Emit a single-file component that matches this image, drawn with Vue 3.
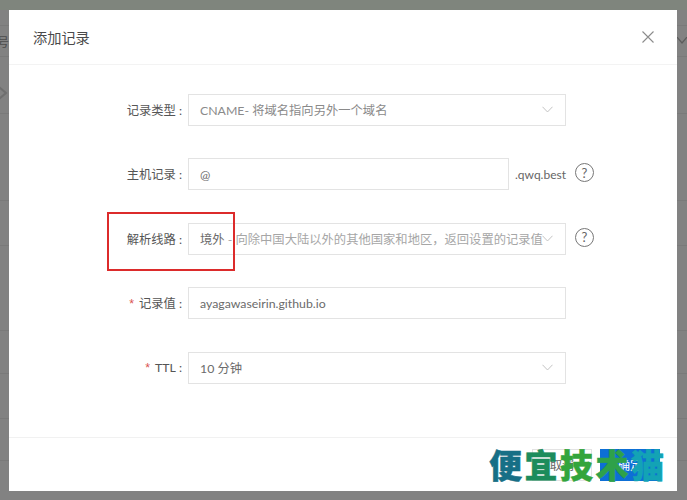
<script setup>
const rows = [
  { label: '记录类型', value: 'CNAME- 将域名指向另外一个域名', select: true, kind: 'soft' },
  { label: '主机记录', value: '@', suffix: '.qwq.best', help: true, kind: 'host' },
  { label: '解析线路', value: '境外', hint: ' - 向除中国大陆以外的其他国家和地区，返回设置的记录值', select: true, help: true, kind: 'route' },
  { label: '记录值', value: 'ayagawaseirin.github.io', required: true },
  { label: 'TTL', value: '10 分钟', select: true, required: true },
]
const marks = [
  { text: '便', color: '#176f86' },
  { text: '宜', color: '#1c8c5c' },
  { text: '技', color: '#33a53c' },
  { text: '术', color: '#2ea14a' },
  { text: '猫', color: '#13a3b5' },
]
const lines = [25, 56, 113, 200, 245, 330, 373, 418, 460]
</script>

<template>
  <div class="page">
    <div class="topband"></div>
    <div v-for="y in lines" :key="y" class="backrow" :style="{ top: y + 'px' }"></div>
    <span class="backtext">号</span>
    <svg class="backicon" viewBox="0 0 10 16" width="10" height="16">
      <path d="M1 2l7 6-7 6" fill="none" stroke="#6f6f6f" stroke-width="2" />
    </svg>
    <svg class="backchevron" viewBox="0 0 10 8" width="10" height="8">
      <path d="M0 0l5 6 5-6" fill="none" stroke="#5c5c5c" stroke-width="1.200" />
    </svg>

    <section class="modal">
      <header class="head">
        <h2 class="title">添加记录</h2>
        <svg class="close" viewBox="0 0 12 12" width="12" height="12">
          <path d="M.5.5l11 11M11.500.5l-11 11" fill="none" stroke="#8c8c8c" stroke-width="1.100" />
        </svg>
      </header>

      <div class="form">
        <div v-for="row in rows" :key="row.label" class="row">
          <label class="label">
            <span v-if="row.required" class="star">*</span>{{ row.label }}<span class="colon">:</span>
          </label>
          <div class="field" :class="{ narrow: row.kind === 'host', soft: row.kind === 'soft' }">
            <span class="value">{{ row.value }}</span>
            <span v-if="row.hint" class="hint">{{ row.hint }}</span>
            <svg v-if="row.select" class="chevron" viewBox="0 0 12 7" width="11" height="7">
              <path d="M.5.500 6 6.200 11.500.5" fill="none" stroke="#bdbdbd" stroke-width="1" />
            </svg>
          </div>
          <span v-if="row.suffix" class="suffix">{{ row.suffix }}</span>
          <span v-if="row.help" class="help">?</span>
        </div>
      </div>

      <footer class="foot">
        <button class="btn">取消</button>
        <button class="btn primary">确定</button>
      </footer>
    </section>

    <div class="redbox"></div>
    <div class="watermark">
      <span v-for="m in marks" :key="m.text" :style="{ color: m.color }">{{ m.text }}</span>
    </div>
  </div>
</template>

<style>
html, body { margin: 0; background: #808080; }
</style>

<style scoped>
.page {
  position: relative;
  width: 687px;
  height: 500px;
  box-sizing: border-box;
  padding: 10px 10px 9px 9px;
  overflow: hidden;
  background: #828282;
  font-family: Lato, "Noto Sans CJK SC", sans-serif;
  color: #5f5f5f;
}
.topband {
  position: absolute;
  inset: 0 0 auto 0;
  height: 10px;
  background: #7f857d;
}
.backrow {
  position: absolute;
  left: 0;
  right: 0;
  height: 1px;
  background: #7a7a7a;
}
.backtext {
  position: absolute;
  left: -3px;
  top: 33px;
  font-size: 12px;
  color: #4c4c4c;
}
.backicon {
  position: absolute;
  left: -2px;
  top: 85px;
}
.backchevron {
  position: absolute;
  left: 677px;
  top: 37px;
}

.modal {
  position: relative;
  display: flex;
  flex-direction: column;
  height: 100%;
  background: #fff;
}
.head {
  display: flex;
  align-items: center;
  justify-content: space-between;
  box-sizing: border-box;
  height: 55px;
  padding: 0 23px 0 24px;
  border-bottom: 1px solid #f3f3f3;
}
.title {
  margin: 0;
  font-size: 14.200px;
  font-weight: 400;
  color: #4a4a4a;
}
.close { display: block; }

.form {
  flex: 1;
  display: flex;
  flex-direction: column;
  gap: 32.400px;
  padding-top: 29px;
}
.row {
  display: flex;
  align-items: center;
  height: 32px;
  font-size: 12.300px;
}
.label {
  flex: none;
  box-sizing: border-box;
  width: 173px;
  text-align: right;
  color: #555;
  white-space: nowrap;
}
.colon { margin-left: 3px; }
.star {
  margin-right: 5px;
  color: #d9534f;
  font-family: "Liberation Sans", sans-serif;
}
.field {
  position: relative;
  flex: none;
  box-sizing: border-box;
  width: 377.500px;
  height: 32px;
  margin-left: 6px;
  padding: 0 11px;
  border: 1px solid #e3e3e3;
  line-height: 32px;
  white-space: nowrap;
  overflow: hidden;
  color: #6b6b6b;
  background: #fff;
}
.field.narrow { width: 321px; }
.field.soft { color: #8a8a8a; }
.hint { color: #a6a6a6; white-space: pre; }
.chevron {
  position: absolute;
  right: 12px;
  top: 11px;
  background: #fff;
}
.suffix {
  margin-left: 6px;
  color: #666;
  font-size: 12px;
}
.help {
  position: absolute;
  left: 566px;
  display: flex;
  align-items: center;
  justify-content: center;
  box-sizing: border-box;
  width: 19px;
  height: 19px;
  margin-top: -3px;
  border: 1.300px solid #777;
  border-radius: 50%;
  font-size: 13px;
  color: #666;
}

.foot {
  display: flex;
  justify-content: flex-end;
  align-items: center;
  gap: 8px;
  box-sizing: border-box;
  height: 54px;
  padding: 0 17px 0 0;
  border-top: 1px solid #f1f1f1;
}
.btn {
  box-sizing: border-box;
  width: 60px;
  height: 32px;
  padding: 0;
  border: 1px solid #e3e3e3;
  background: #fff;
  color: #666;
  font: 12.300px Lato, "Noto Sans CJK SC", sans-serif;
}
.primary {
  background: #0d6fd6;
  border-color: #0d6fd6;
  color: #fff;
}
.redbox {
  position: absolute;
  left: 107px;
  top: 212px;
  width: 128px;
  height: 59px;
  box-sizing: border-box;
  border: 2px solid #dc2b2b;
}
.watermark {
  position: absolute;
  left: 489px;
  top: 444px;
  display: flex;
  gap: 2.500px;
  font: 900 33px/40px "Noto Sans CJK SC", sans-serif;
  white-space: nowrap;
  -webkit-text-stroke: .5px currentColor;
}
</style>
